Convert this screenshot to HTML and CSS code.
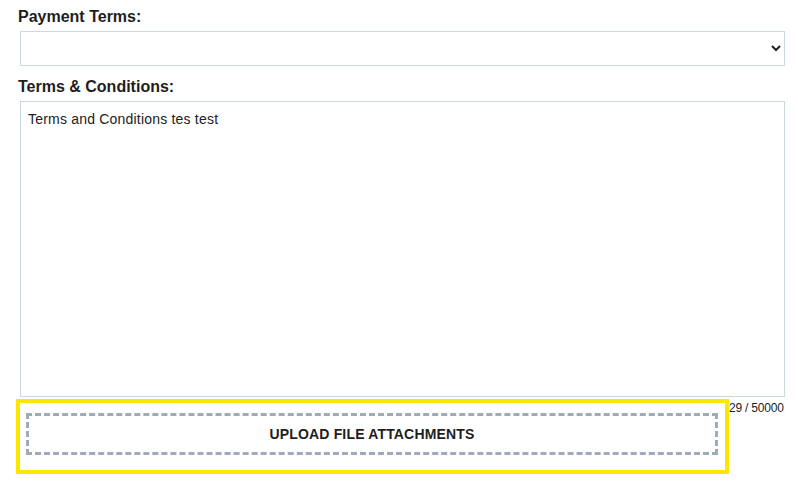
FILE: index.html
```html
<!DOCTYPE html>
<html lang="en">
<head>
    <meta charset="UTF-8">
    <meta name="viewport" content="width=device-width, initial-scale=1.0">
    <title>Terms</title>
    <link rel="stylesheet" href="styles.css">
</head>
<body>
    <div class="form">
        <label class="field-label" for="payment-terms">Payment Terms:</label>
        <select id="payment-terms" class="field-select">
            <option value=""></option>
        </select>

        <label class="field-label gap-top" for="terms">Terms &amp; Conditions:</label>
        <textarea id="terms" class="field-textarea">Terms and Conditions tes test</textarea>

        <div class="attach-row">
            <div class="highlight">
                <button class="upload-btn">Upload File Attachments</button>
            </div>
            <div class="char-count">29 / 50000</div>
        </div>
    </div>
</body>
</html>
```

FILE: styles.css
```css
body {
    margin: 0;
    background: #ffffff;
    font-family: 'Liberation Sans', Arial, sans-serif;
    color: #222222;
}
.form {
    padding: 7px 13px 0 20px;
}
.field-label {
    display: block;
    margin-left: -2px;
    margin-bottom: 4px;
    font-size: 16px;
    line-height: 20px;
    font-weight: bold;
    color: #1e1e1e;
}
.gap-top {
    margin-top: 11px;
}
.field-select {
    display: block;
    width: 100%;
    height: 35px;
    margin: 0;
    padding-right: 4px;
    border: 1px solid #c9dade;
    border-radius: 0;
    background-color: #ffffff;
    font-family: inherit;
    font-size: 14px;
    color: #222;
}
.field-textarea {
    display: block;
    box-sizing: border-box;
    width: 100%;
    height: 296px;
    margin: 0;
    padding: 9px 7px;
    border: 1px solid #c9dade;
    border-radius: 0;
    resize: none;
    font-family: inherit;
    font-size: 14px;
    line-height: 16px;
    letter-spacing: 0.2px;
    color: #222;
}
.attach-row {
    display: flex;
    align-items: flex-start;
    margin-left: -4px;
    margin-top: 2px;
}
.highlight {
    flex: 1;
    border: 4px solid #ffe600;
    padding: 10px 7px 15px 6px;
}
.upload-btn {
    display: block;
    width: 100%;
    height: 42px;
    border: 3px dashed #a0abb9;
    background: #ffffff;
    font-family: inherit;
    font-size: 14px;
    font-weight: bold;
    letter-spacing: 0.17px;
    text-transform: uppercase;
    color: #1e1e1e;
    cursor: pointer;
}
.char-count {
    width: 54px;
    padding: 2px 2px 0 0;
    font-size: 12px;
    line-height: 14px;
    letter-spacing: -0.2px;
    text-align: right;
    white-space: nowrap;
    color: #222;
}
```
